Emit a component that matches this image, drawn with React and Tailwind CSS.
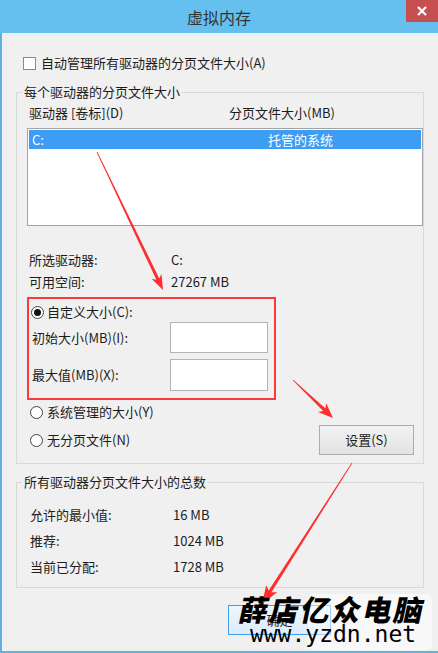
import React from "react";

// === 对话框：虚拟内存 ===
const FONT = { fontFamily: '"Noto Sans CJK SC", "Noto Sans", sans-serif' };

function Radio({ checked }) {
  return (
    <span className="w-[13px] h-[13px] rounded-full border border-[#444] bg-white flex items-center justify-center flex-shrink-0">
      {checked && <span className="w-[7px] h-[7px] rounded-full bg-[#111]" />}
    </span>
  );
}

function Arrow({ x1, y1, x2, y2, head = 16, hw = 6 }) {
  const dx = x2 - x1, dy = y2 - y1, len = Math.hypot(dx, dy);
  const ux = dx / len, uy = dy / len, nx = -uy, ny = ux;
  const nb = [x2 - ux * head, y2 - uy * head];
  const ns = [x2 - ux * (head - 3), y2 - uy * (head - 3)];
  const p = (b, w) => `${b[0] + nx * w},${b[1] + ny * w}`;
  const pts = [
    p([x1, y1], 0.4), p(ns, 1.6), p(nb, hw), `${x2},${y2}`, p(nb, -hw), p(ns, -1.6), p([x1, y1], -0.4),
  ].join(" ");
  return <polygon points={pts} fill="#ff2d2d" />;
}

export default function App() {
  return (
    <div className="relative w-[438px] h-[653px] overflow-hidden bg-[#f0f0f0] text-[13px] leading-[18px] text-[#1c1c1c]" style={FONT}>
      {/* 标题栏 */}
      <div className="relative h-[33px] bg-[#66c0ef] flex items-center justify-center">
        <span className="text-[16px] text-[#333]">虚拟内存</span>
        <div className="absolute right-0 top-0 w-[32px] h-[22px] bg-[#c74f4f] flex items-center justify-center">
          <svg width="10" height="10" viewBox="0 0 10 10">
            <path d="M1 1 L9 9 M9 1 L1 9" stroke="#fff" strokeWidth="2.2" />
          </svg>
        </div>
      </div>

      <div className="h-[620px] border-l-2 border-b-2 border-[#5eb2e2] pt-[21px]">
        <label className="flex items-center gap-[5px] ml-[21px] h-[18px]">
          <span className="w-[13px] h-[13px] border border-[#8a8a8a] bg-white" />
          <span>自动管理所有驱动器的分页文件大小(A)</span>
        </label>

        <fieldset className="ml-[14px] w-[408px] mt-[11px] border border-[#d8d8d8] pb-[8px]">
          <legend className="ml-[5px] px-[2px]">每个驱动器的分页文件大小</legend>
          <div className="flex mt-[3px] ml-[12px]">
            <span className="w-[200px]">驱动器 [卷标](D)</span>
            <span>分页文件大小(MB)</span>
          </div>
          <div className="ml-[10px] mt-[6px] w-[396px] h-[98px] border border-[#a3a3a3] bg-white p-[1px]">
            <div className="h-[19px] bg-[#3d9df5] text-white flex items-center pl-[3px]">
              <span className="w-[236px]">C:</span>
              <span>托管的系统</span>
            </div>
          </div>

          <div className="ml-[12px] mt-[25px] flex flex-col gap-[4px]">
            <div className="flex"><span className="w-[142px]">所选驱动器:</span><span>C:</span></div>
            <div className="flex"><span className="w-[142px]">可用空间:</span><span>27267 MB</span></div>
          </div>

          {/* 红框标注 */}
          <div className="ml-[10px] mt-[6px] w-[249px] h-[103px] border-2 border-[#fd3a3a] pt-[4px] pl-[2px] pb-[7px]">
            <div className="flex items-center gap-[3px] h-[18px]">
              <Radio checked />
              <span>自定义大小(C):</span>
            </div>
            <div className="flex items-center mt-[1px] pl-[1px]">
              <span className="w-[138px]">初始大小(MB)(I):</span>
              <span className="w-[98px] h-[31px] border border-[#b3b3b3] bg-white" />
            </div>
            <div className="flex items-center mt-[6px] pl-[1px]">
              <span className="w-[138px]">最大值(MB)(X):</span>
              <span className="w-[98px] h-[32px] border border-[#b3b3b3] bg-white" />
            </div>
          </div>

          <div className="flex items-center gap-[4px] ml-[13px] mt-[3px] h-[18px]">
            <Radio />
            <span>系统管理的大小(Y)</span>
          </div>
          <div className="flex items-center justify-between mt-[4px] ml-[13px] mr-[9px] h-[30px]">
            <div className="flex items-center gap-[4px]">
              <Radio />
              <span>无分页文件(N)</span>
            </div>
            <button className="w-[95px] h-[30px] border border-[#acacac] bg-gradient-to-b from-[#f2f2f2] to-[#e3e3e3]">设置(S)</button>
          </div>
        </fieldset>

        <fieldset className="ml-[14px] w-[408px] mt-[9px] border border-[#d8d8d8] pb-[11px]">
          <legend className="ml-[5px] px-[2px]">所有驱动器分页文件大小的总数</legend>
          <div className="ml-[13px] mt-[15px] flex flex-col gap-[8px]">
            <div className="flex"><span className="w-[143px]">允许的最小值:</span><span>16 MB</span></div>
            <div className="flex"><span className="w-[143px]">推荐:</span><span>1024 MB</span></div>
            <div className="flex"><span className="w-[143px]">当前已分配:</span><span>1728 MB</span></div>
          </div>
        </fieldset>

        <button className="ml-[226px] mt-[17px] w-[103px] h-[30px] border border-[#3c9ef0] bg-gradient-to-b from-[#eef6fd] to-[#dcecfb]">确定</button>
      </div>

      {/* 箭头标注 */}
      <svg className="absolute inset-0 pointer-events-none" width="438" height="653">
        <Arrow x1={97} y1={152} x2={163} y2={290} head={15} hw={5.5} />
        <Arrow x1={293} y1={380} x2={333} y2={418} head={15} hw={6} />
        <Arrow x1={352} y1={463} x2={262} y2={604} head={18} hw={6.5} />
      </svg>

      {/* 水印 */}
      <div className="absolute left-[308px] top-[594px] w-[124px] h-[56px] bg-white/50 rounded-[6px]" />
      <div className="absolute left-[240px] top-[592px] flex flex-col items-center">
        <span className="text-[29px] leading-[32px] font-black text-black tracking-[2px] -skew-x-12" style={FONT}>薛店亿众电脑</span>
        <span className="text-[23px] leading-[24px] text-black mt-[-2px]" style={{ fontFamily: '"DejaVu Sans Mono", monospace' }}>www.yzdn.net</span>
      </div>
    </div>
  );
}
